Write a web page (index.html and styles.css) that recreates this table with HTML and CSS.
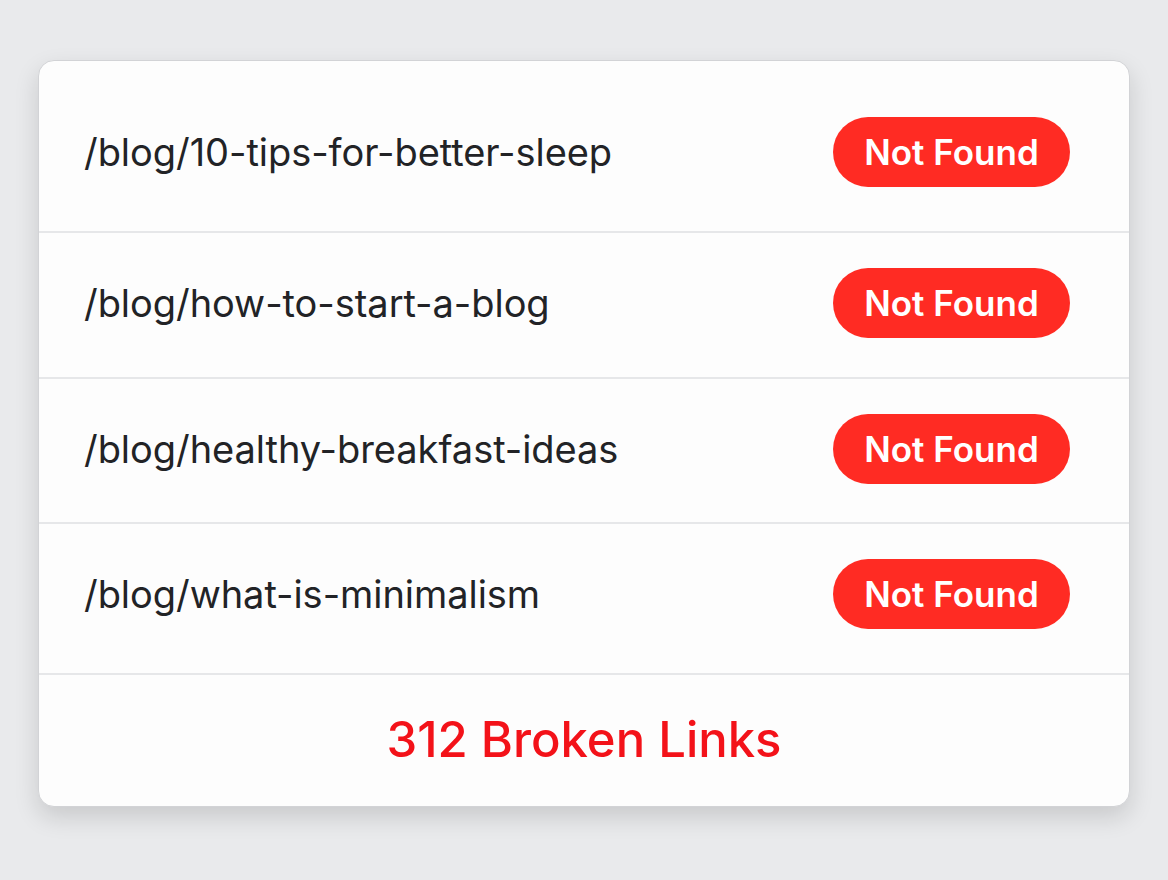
FILE: index.html
```html
<!DOCTYPE html>
<html lang="en">

<head>
    <meta charset="UTF-8">
    <meta name="viewport" content="width=device-width, initial-scale=1.0">
    <title>Broken Links</title>
    <link rel="stylesheet" href="styles.css">
</head>

<body>
    <!-- Lista de links quebrados -->
    <div class="card">
        <div class="row row-first">
            <span class="path">/blog/10-tips-for-better-sleep</span>
            <span class="badge">Not Found</span>
        </div>
        <div class="row row-second">
            <span class="path">/blog/how-to-start-a-blog</span>
            <span class="badge">Not Found</span>
        </div>
        <div class="row row-third">
            <span class="path">/blog/healthy-breakfast-ideas</span>
            <span class="badge">Not Found</span>
        </div>
        <div class="row row-fourth">
            <span class="path">/blog/what-is-minimalism</span>
            <span class="badge">Not Found</span>
        </div>
        <div class="summary">312 Broken Links</div>
    </div>
</body>

</html>
```

FILE: styles.css
```css
html {
    background-color: #e9eaec;
}

body {
    font-family: Inter, "Noto Sans", sans-serif;
    margin: 0;
    padding: 60px 38px;
    min-height: 100vh;
    box-sizing: border-box;
    background-color: #e9eaec;
}

/* Card */
.card {
    width: 1092px;
    box-sizing: border-box;
    background-color: #fdfdfd;
    border: 1px solid #d2d3d6;
    border-radius: 16px;
    box-shadow: 0 10px 24px rgba(0, 0, 0, 0.14);
    overflow: hidden;
}

.row {
    display: flex;
    align-items: center;
    justify-content: space-between;
    box-sizing: border-box;
    padding: 0 59px 0 45px;
    border-bottom: 2px solid #e6e7e9;
}

.row-first {
    height: 172px;
    padding-top: 12px;
}

.row-second {
    height: 146px;
    padding-bottom: 4px;
}

.row-third {
    height: 145px;
    padding-bottom: 3px;
}

.row-fourth {
    height: 151px;
    padding-bottom: 9px;
}

.path {
    font-size: 38px;
    color: #222326;
    letter-spacing: -0.05px;
}

.badge {
    display: flex;
    align-items: center;
    justify-content: center;
    width: 237px;
    height: 70px;
    border-radius: 35px;
    background-color: #ff2b23;
    color: #fff;
    font-size: 35px;
    font-weight: 600;
}

.summary {
    height: 131px;
    display: flex;
    align-items: center;
    justify-content: center;
    font-size: 49px;
    font-weight: 500;
    color: #f31219;
    padding-bottom: 2px;
    box-sizing: border-box;
}
```
